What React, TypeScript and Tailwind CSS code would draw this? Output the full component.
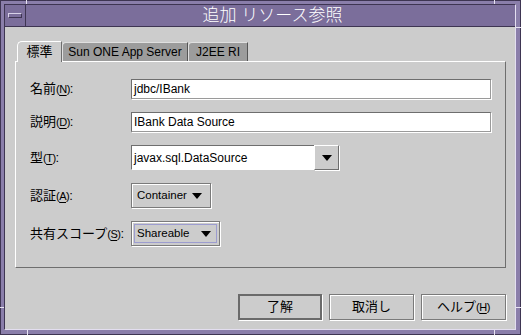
import React from "react";

const jp = "font-['Liberation_Sans','Noto_Sans_CJK_JP',sans-serif]";

function Arrow() {
  return (
    <svg width="10" height="6" viewBox="0 0 10 6" className="shrink-0">
      <polygon points="0,0 10,0 5,6" fill="#000" />
    </svg>
  );
}

function Mn({ k }: { k: string }) {
  return (
    <span className="text-[11px] tracking-[-0.5px]">
      (<span className="underline underline-offset-2">{k}</span>)
    </span>
  );
}

function Label({ text, k }: { text: string; k: string }) {
  return (
    <div className="w-[101px] shrink-0 text-[13px] text-black">
      {text}
      <Mn k={k} />:
    </div>
  );
}

function TextField({ value }: { value: string }) {
  return (
    <div className="flex-1 h-[20px] bg-white border-t border-l border-[#6e6e6e] shadow-[1px_1px_0_#ffffff] border-r border-b border-r-[#9a9a9a] border-b-[#9a9a9a] flex items-center pl-[2px] text-[12px] text-black">
      {value}
    </div>
  );
}

function Choice({ value, w, focus }: { value: string; w: string; focus?: boolean }) {
  return (
    <div className={`${w} h-[25px] border border-[#7a7a7a] shadow-[1px_1px_0_#ffffff,inset_1px_1px_0_#ffffff] p-[2px]`}>
      <div
        className={`h-full flex items-center justify-between pl-[2px] pr-[5px] text-[11.5px] text-black ${
          focus ? "border border-[#9c9ccf]" : "border border-transparent"
        }`}
      >
        <span>{value}</span>
        <Arrow />
      </div>
    </div>
  );
}

function Btn({ children, def }: { children: React.ReactNode; def?: boolean }) {
  return (
    <div
      className={`h-[26px] flex items-center justify-center text-[13px] text-black ${
        def
          ? "w-[84px] border-2 border-[#6a6a6a] shadow-[1px_1px_0_#ffffff]"
          : "w-[85px] border border-[#7a7a7a] shadow-[1px_1px_0_#ffffff,inset_1px_1px_0_#ffffff]"
      }`}
    >
      {children}
    </div>
  );
}

export default function App() {
  return (
    <div className={`relative w-[521px] h-[335px] bg-[#8a7eaa] ${jp} overflow-hidden`}>
      {/* frame lines */}
      <div className="absolute inset-0 border border-[#3e3552]" />
      <div className="absolute left-[26px] top-0 w-px h-[27px] bg-[#e8e4f2]" />
      <div className="absolute left-[494px] top-0 w-px h-[5px] bg-[#e8e4f2]" />
      <div className="absolute left-[27px] bottom-0 w-px h-[6px] bg-[#e8e4f2]" />
      <div className="absolute left-[494px] bottom-0 w-px h-[6px] bg-[#e8e4f2]" />
      <div className="absolute left-0 top-[307px] w-[5px] h-px bg-[#e8e4f2]" />
      <div className="absolute right-0 top-[27px] w-[6px] h-px bg-[#e8e4f2]" />
      <div className="absolute right-0 top-[307px] w-[6px] h-px bg-[#e8e4f2]" />

      <div className="absolute left-[4px] top-[4px] right-[5px] bottom-[5px] flex flex-col border-l border-t border-[#3e3552] border-r-[#e3def0] border-b-[#e3def0] border-r border-b">
        {/* title bar */}
        <div className="h-[22px] flex bg-[#7b6e9b] border-b border-[#3e3552]">
          <div className="w-[21px] flex items-center justify-center border-r border-[#3e3552]">
            <div className="w-[14px] h-[5px] border-t border-l border-[#d8d2e8] border-b border-r border-b-[#3e3552] border-r-[#3e3552]" />
          </div>
          <div className="flex-1 flex items-center justify-center text-white text-[17px] font-light leading-none pl-[4px]">
            追加 リソース参照
          </div>
        </div>

        {/* content */}
        <div className="flex-1 bg-[#cccccc] flex flex-col pl-[10px] pr-[9px] pt-[14px]">
          {/* tabs */}
          <div className="flex h-[20px] pl-[2px] items-end text-[12px] text-black">
            <div className="relative z-10 h-[21px] w-[45px] -mb-px bg-[#cccccc] border-t border-l border-white border-r border-r-[#6e6e6e] rounded-tl-[5px] flex items-center justify-center text-[13px]">
              標準
            </div>
            <div className="h-[19px] w-[126px] bg-[#9c9c9c] border-t border-l border-[#e0e0e0] border-r border-r-[#555] rounded-tl-[4px] flex items-center justify-center">
              Sun ONE App Server
            </div>
            <div className="h-[19px] w-[60px] bg-[#9c9c9c] border-t border-l border-[#e0e0e0] border-r border-r-[#555] rounded-tl-[4px] flex items-center justify-center">
              J2EE RI
            </div>
          </div>

          {/* panel */}
          <div className="w-[491px] h-[207px] border-t border-l border-white border-r border-b border-r-[#6e6e6e] border-b-[#6e6e6e] pl-[14px] pr-[14px] pt-[17px] flex flex-col gap-[13px]">
            <div className="flex items-center">
              <Label text="名前" k="N" />
              <TextField value="jdbc/IBank" />
            </div>
            <div className="flex items-center">
              <Label text="説明" k="D" />
              <TextField value="IBank Data Source" />
            </div>
            <div className="flex items-center">
              <Label text="型" k="T" />
              <div className="flex">
                <div className="w-[183px] h-[25px] bg-white border-t border-l border-[#6e6e6e] border-b border-b-[#ffffff] flex items-center pl-[2px] text-[12px] text-black">
                  javax.sql.DataSource
                </div>
                <div className="w-[25px] h-[25px] bg-[#cccccc] border-t border-l border-white border-r border-b border-r-[#6e6e6e] border-b-[#6e6e6e] shadow-[1px_1px_0_#ffffff] flex items-center justify-center">
                  <Arrow />
                </div>
              </div>
            </div>
            <div className="flex items-center">
              <Label text="認証" k="A" />
              <Choice value="Container" w="w-[80px]" />
            </div>
            <div className="flex items-center">
              <Label text="共有スコープ" k="S" />
              <Choice value="Shareable" w="w-[89px]" focus />
            </div>
          </div>

          {/* buttons */}
          <div className="flex justify-end gap-[7px] mt-[26px]">
            <Btn def>了解</Btn>
            <Btn>取消し</Btn>
            <Btn>
              ヘルプ
              <Mn k="H" />
            </Btn>
          </div>
        </div>
      </div>
    </div>
  );
}
